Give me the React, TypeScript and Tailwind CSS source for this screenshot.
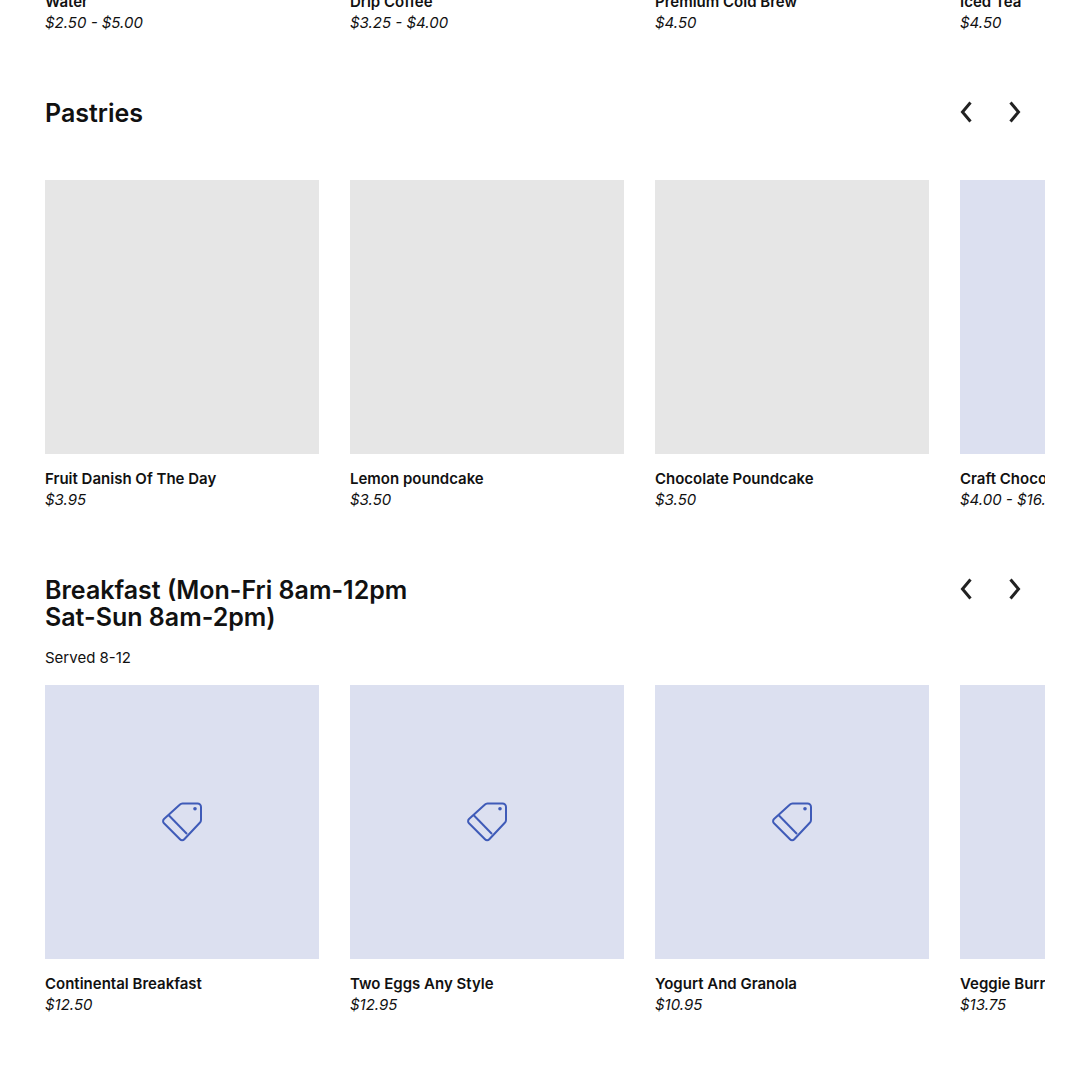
import React from "react";

type Item = { name: string; price: string; tone?: "gray" | "blue"; icon?: boolean };

const drinks: Item[] = [
  { name: "Water", price: "$2.50 - $5.00" },
  { name: "Drip Coffee", price: "$3.25 - $4.00" },
  { name: "Premium Cold Brew", price: "$4.50" },
  { name: "Iced Tea", price: "$4.50" },
];

const pastries: Item[] = [
  { name: "Fruit Danish Of The Day", price: "$3.95", tone: "gray" },
  { name: "Lemon poundcake", price: "$3.50", tone: "gray" },
  { name: "Chocolate Poundcake", price: "$3.50", tone: "gray" },
  { name: "Craft Chocolate Bar", price: "$4.00 - $16.00", tone: "blue" },
];

const breakfast: Item[] = [
  { name: "Continental Breakfast", price: "$12.50", tone: "blue", icon: true },
  { name: "Two Eggs Any Style", price: "$12.95", tone: "blue", icon: true },
  { name: "Yogurt And Granola", price: "$10.95", tone: "blue", icon: true },
  { name: "Veggie Burrito", price: "$13.75", tone: "blue", icon: true },
];

function TagIcon() {
  return (
    <svg width="40" height="40" viewBox="0 0 40 40" fill="none" stroke="#3f5bb8" strokeWidth="2" strokeLinejoin="round">
      <path d="M20.5 1.5H35.5a3.5 3.5 0 0 1 3.5 3.5V18a4 4 0 0 1-1.2 2.8L22.3 37.3a3 3 0 0 1-4.3 0L2 21.3a3 3 0 0 1 0-4.3L17.7 2.7a4 4 0 0 1 2.8-1.2Z" />
      <path d="M6.5 13 25 32" />
      <circle cx="33" cy="6.8" r="1.8" fill="#3f5bb8" stroke="none" />
    </svg>
  );
}

function Caption({ item }: { item: Item }) {
  return (
    <div className="pt-[15px] whitespace-nowrap">
      <p className="text-[15px] leading-[20.5px] font-semibold text-[#111]">{item.name}</p>
      <p className="text-[15px] leading-[20.5px] italic text-[#111]">{item.price}</p>
    </div>
  );
}

function Card({ item }: { item: Item }) {
  return (
    <div className="w-[274px] shrink-0">
      <div
        className={
          item.tone === "gray"
            ? "h-[274px] bg-[#e6e6e6] flex items-center justify-center"
            : "h-[274px] bg-[#dce0f0] flex items-center justify-center"
        }
      >
        {item.icon && <TagIcon />}
      </div>
      <Caption item={item} />
    </div>
  );
}

function Arrows() {
  return (
    <div className="-mt-px flex items-center gap-[37px] pr-[24px] pt-[2px]">
      <svg width="12" height="22" viewBox="0 0 12 22" fill="none" stroke="#222" strokeWidth="3">
        <path d="M10.5 1.5 2.5 11l8 9.5" />
      </svg>
      <svg width="12" height="22" viewBox="0 0 12 22" fill="none" stroke="#222" strokeWidth="3">
        <path d="M1.5 1.5 9.5 11l-8 9.5" />
      </svg>
    </div>
  );
}

export default function App() {
  return (
    <div className="h-[1081px] overflow-hidden bg-white pl-[45px] font-['Inter',sans-serif]">
      <div className="w-[1000px] overflow-hidden">
        <div className="-mt-[23px] flex gap-[31px]">
          {drinks.map((d) => (
            <div key={d.name} className="w-[274px] shrink-0">
              <Caption item={d} />
            </div>
          ))}
        </div>

        <div className="mt-[67px] flex w-[1000px] items-start justify-between">
          <h2 className="text-[25px] leading-[27px] font-semibold text-[#111]">Pastries</h2>
          <Arrows />
        </div>
        <div className="mt-[53px] flex gap-[31px]">
          {pastries.map((p) => (
            <Card key={p.name} item={p} />
          ))}
        </div>

        <div className="mt-[67px] flex w-[1000px] items-start justify-between">
          <h2 className="text-[25px] leading-[27px] font-semibold text-[#111]">
            Breakfast (Mon-Fri 8am-12pm
            <br />
            Sat-Sun 8am-2pm)
          </h2>
          <Arrows />
        </div>
        <p className="mt-[17px] text-[15px] leading-[20px] text-[#111]">Served 8-12</p>
        <div className="mt-[17px] flex gap-[31px]">
          {breakfast.map((b) => (
            <Card key={b.name} item={b} />
          ))}
        </div>
      </div>
    </div>
  );
}
